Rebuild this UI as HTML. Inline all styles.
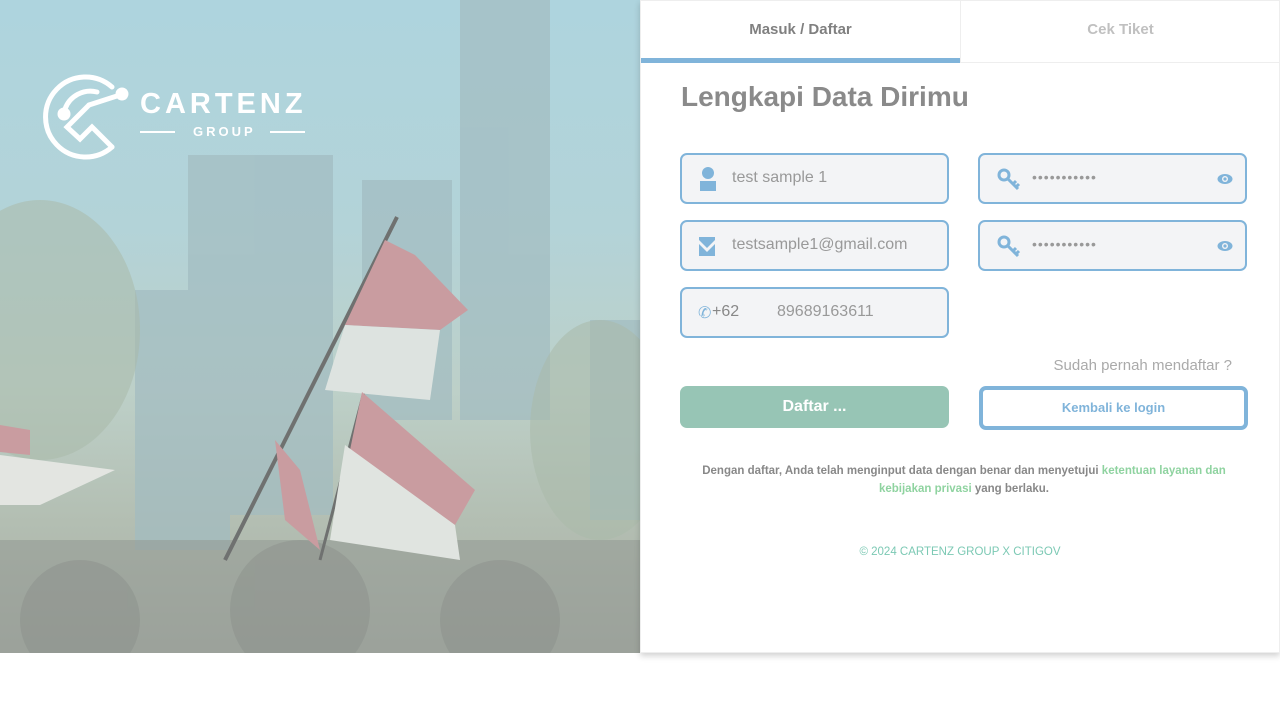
<!DOCTYPE html>
<html><head><meta charset="utf-8"><style>
*{box-sizing:border-box;margin:0;padding:0}
body{width:1280px;height:720px;background:#fff;font-family:"Liberation Sans",sans-serif;position:relative;overflow:hidden}
#left{position:absolute;left:0;top:0;width:640px;height:653px;overflow:hidden;background:linear-gradient(180deg,#aed4de 0%,#b3d3d8 35%,#bdd0c8 60%,#b3beb2 80%,#a8aea6 100%)}
#right{position:absolute;left:640px;top:0;width:640px;height:653px;background:#fff;border:1px solid #eee;box-shadow:0 3px 6px rgba(0,0,0,.18)}
.tab{position:absolute;top:0;height:62px;line-height:58px;text-align:center;font-weight:bold;font-size:15px;border-bottom:1px solid #eee}
h1{position:absolute;left:40px;top:80px;font-size:28px;color:#8a8a8a;font-weight:bold}
.in{position:absolute;width:269px;height:51px;border:2px solid #80b4da;border-radius:7px;background:#f3f4f6;font-size:16px;color:#999}
.in span{position:absolute;top:14px}
.btn{position:absolute;height:42px;border-radius:7px;text-align:center;font-weight:bold}
</style></head><body>
<div id="left">
<svg width="640" height="653" style="position:absolute;left:0;top:0">
<g fill="#a2bcc1" opacity=".7">
<rect x="188" y="155" width="145" height="360"/><rect x="135" y="290" width="95" height="260"/>
<rect x="362" y="180" width="90" height="240"/><rect x="460" y="0" width="90" height="420"/>
<rect x="590" y="320" width="50" height="200"/>
</g>
<g fill="#a9b9aa" opacity=".55">
<ellipse cx="40" cy="330" rx="100" ry="130"/><ellipse cx="600" cy="430" rx="70" ry="110"/>
</g>
<rect x="0" y="540" width="640" height="113" fill="#8f9690" opacity=".5"/>
<g fill="#8a8f8a" opacity=".45"><circle cx="80" cy="620" r="60"/><circle cx="300" cy="610" r="70"/><circle cx="500" cy="620" r="60"/></g>
<line x1="225" y1="560" x2="397" y2="217" stroke="#6f7170" stroke-width="4"/>
<line x1="320" y1="560" x2="365" y2="388" stroke="#6f7170" stroke-width="3"/>
<path d="M385 240 L415 255 L468 310 L440 330 L345 325Z" fill="#c99ca0"/>
<path d="M345 325 L440 330 L430 400 L325 390Z" fill="#dde3e0"/>
<path d="M362 392 L475 490 L455 525 L350 450Z" fill="#c99ca0"/>
<path d="M345 445 L455 525 L460 560 L330 540Z" fill="#e0e4e0"/>
<path d="M0 425 L30 430 L30 455 L0 452Z" fill="#c99ca0"/>
<path d="M0 455 L115 470 L40 505 L0 505Z" fill="#e3e5e1"/>
<path d="M275 440 L300 470 L320 550 L285 520Z" fill="#c99ca0"/>
</svg>
<svg width="90" height="90" viewBox="0 0 90 90" style="position:absolute;left:42px;top:72px" fill="none" stroke="#fff" stroke-width="5" stroke-linecap="round">
<path d="M70 15 A40 40 0 1 0 70 75"/>
<path d="M55 20 A27 27 0 0 0 23 37"/>
<path d="M70 75 L50 55 L38 67 L25 55 L47 33"/>
<path d="M47 33 L78 23"/>
<circle cx="22" cy="42" r="4" fill="#fff"/><circle cx="80" cy="22" r="4" fill="#fff"/>
</svg>
<div style="position:absolute;left:140px;top:88px;color:#fff;font-size:29px;letter-spacing:4px;font-weight:bold">CARTENZ</div>
<div style="position:absolute;left:140px;top:131px;width:35px;height:2px;background:#fff"></div>
<div style="position:absolute;left:193px;top:124px;color:#fff;font-size:13px;letter-spacing:3px;font-weight:bold">GROUP</div>
<div style="position:absolute;left:270px;top:131px;width:35px;height:2px;background:#fff"></div>
</div>
<div id="right">
<div class="tab" style="left:0;width:319px;color:#808080;border-bottom:5px solid #80b4da">Masuk / Daftar</div>
<div class="tab" style="left:319px;width:320px;color:#c0c0c0;border-left:1px solid #eee">Cek Tiket</div>
<h1>Lengkapi Data Dirimu</h1>
<div class="in" style="left:39px;top:152px">
<svg style="position:absolute;left:16px;top:12px" width="20" height="24"><circle cx="10" cy="6" r="6" fill="#80b4da"/><rect x="2" y="14" width="16" height="10" fill="#80b4da"/></svg>
<span style="left:50px">test sample 1</span></div>
<div class="in" style="left:39px;top:219px">
<svg style="position:absolute;left:16px;top:14px" width="18" height="20"><path d="M1 1H17V4L9 12L1 4Z" fill="#80b4da"/><path d="M1 8L9 16L17 8V20H1Z" fill="#80b4da"/></svg>
<span style="left:50px">testsample1@gmail.com</span></div>
<div class="in" style="left:39px;top:286px">
<span style="left:16px;color:#80b4da">&#9990;</span><span style="left:30px;color:#888">+62</span><span style="left:95px">89689163611</span></div>
<div class="in" style="left:337px;top:152px">
<svg style="position:absolute;left:16px;top:12px" width="26" height="26" fill="none" stroke="#80b4da" stroke-width="3"><circle cx="8" cy="8" r="5"/><path d="M12 12L22 22M17 17L20 14M20 20L23 17"/></svg>
<span style="left:52px;letter-spacing:1px;font-size:14px;top:14px">•••••••••••</span>
<svg style="position:absolute;left:237px;top:18px" width="16" height="12"><ellipse cx="8" cy="6" rx="7.5" ry="5" fill="#80b4da"/><circle cx="8" cy="6" r="3" fill="#f3f4f6"/><circle cx="8" cy="6" r="1.6" fill="#80b4da"/></svg></div>
<div class="in" style="left:337px;top:219px">
<svg style="position:absolute;left:16px;top:12px" width="26" height="26" fill="none" stroke="#80b4da" stroke-width="3"><circle cx="8" cy="8" r="5"/><path d="M12 12L22 22M17 17L20 14M20 20L23 17"/></svg>
<span style="left:52px;letter-spacing:1px;font-size:14px;top:14px">•••••••••••</span>
<svg style="position:absolute;left:237px;top:18px" width="16" height="12"><ellipse cx="8" cy="6" rx="7.5" ry="5" fill="#80b4da"/><circle cx="8" cy="6" r="3" fill="#f3f4f6"/><circle cx="8" cy="6" r="1.6" fill="#80b4da"/></svg></div>
<div style="position:absolute;right:47px;top:356px;color:#aaa;font-size:15px">Sudah pernah mendaftar ?</div>
<div class="btn" style="left:39px;top:385px;width:269px;background:#97c5b5;color:#fff;font-size:16px;line-height:42px">Daftar ...</div>
<div class="btn" style="left:338px;top:385px;width:269px;height:44px;border:4px solid #80b4da;color:#80b4da;font-size:13px;line-height:36px;background:#fff">Kembali ke login</div>
<div style="position:absolute;left:40px;top:461px;width:566px;text-align:center;font-size:11.5px;font-weight:bold;color:#888;line-height:18px">Dengan daftar, Anda telah menginput data dengan benar dan menyetujui <span style="color:#8fd3a0">ketentuan layanan dan kebijakan privasi</span> yang berlaku.</div>
<div style="position:absolute;left:0;width:638px;top:545px;text-align:center;font-size:11.5px;color:#7cc9b4">© 2024 CARTENZ GROUP X CITIGOV</div>
</div>
</body></html>
